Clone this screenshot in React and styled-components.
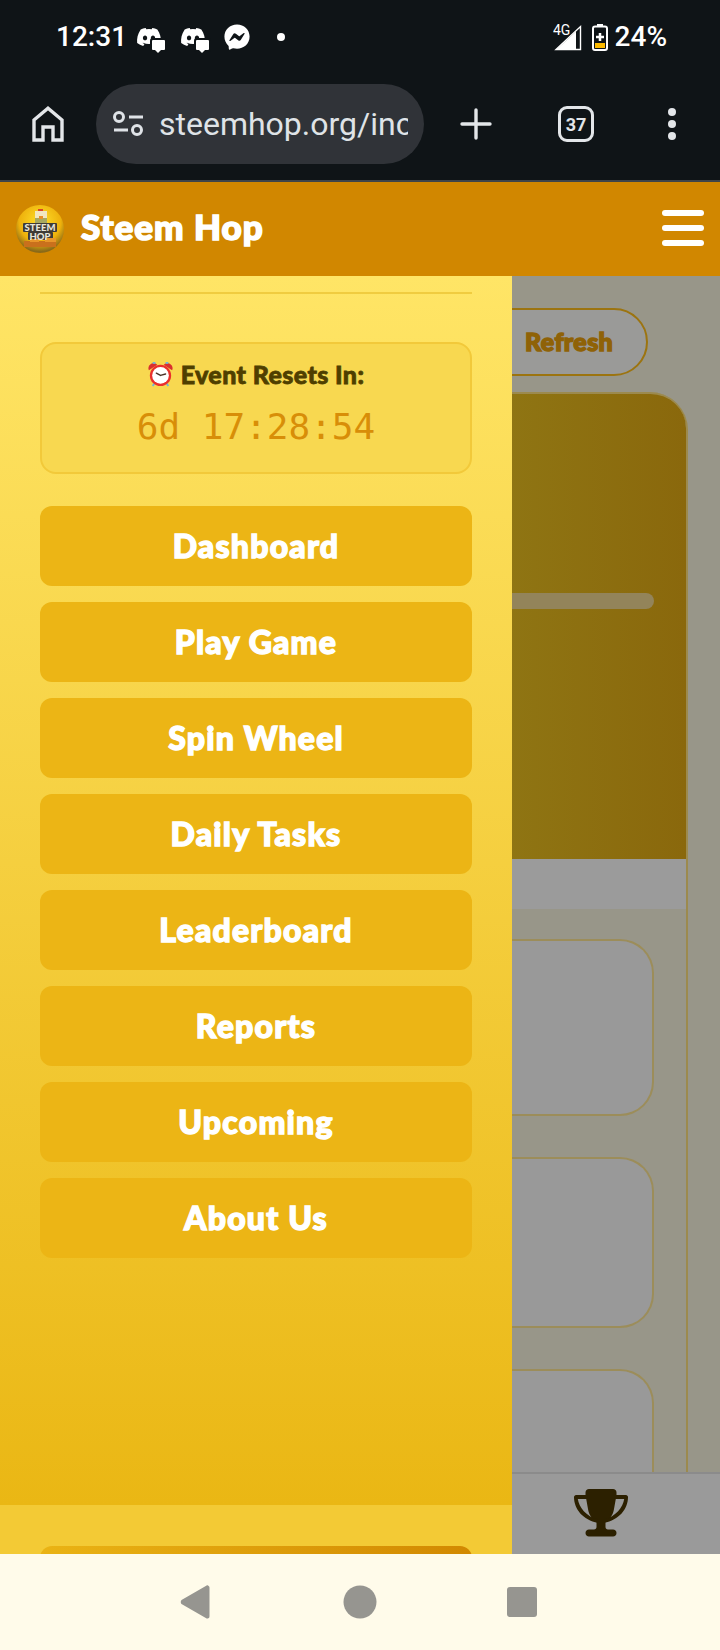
import React from 'react'
import styled, { createGlobalStyle } from 'styled-components'
import { FaDiscord, FaFacebookMessenger } from 'react-icons/fa'

const GlobalStyle = createGlobalStyle`
  html, body {
    margin: 0;
    padding: 0;
    background: #0f1417;
  }
  * {
    box-sizing: border-box;
  }
`

const Screen = styled.div`
  width: 720px;
  height: 1650px;
  display: flex;
  flex-direction: column;
  overflow: hidden;
  font-family: Roboto, sans-serif;
`

/* system status bar */
const StatusBar = styled.div`
  height: 72px;
  flex: none;
  display: flex;
  align-items: center;
  padding: 2px 53px 0 56px;
  background: #0f1417;
  color: #fff;
`

const Clock = styled.span`
  font-size: 28px;
  font-weight: 500;
  line-height: 32px;
  width: 80px;
`

const NoteIcons = styled.div`
  display: flex;
  align-items: center;
  gap: 18px;
  flex: 1;
`

const NoteIcon = styled.span`
  position: relative;
  display: flex;
  width: 26px;
  height: 26px;
  font-size: 26px;
`

const ChatBadge = styled.span`
  position: absolute;
  right: -3px;
  bottom: 0;
  width: 13px;
  height: 10px;
  background: #fff;
  border-radius: 1px;
  box-shadow: 0 0 0 2px #0f1417;
  &::after {
    content: '';
    position: absolute;
    left: 3px;
    bottom: -3px;
    border-left: 3px solid transparent;
    border-right: 3px solid transparent;
    border-top: 3px solid #fff;
  }
`

const Dot = styled.span`
  width: 8px;
  height: 8px;
  margin-left: 9px;
  border-radius: 50%;
  background: #fff;
`

const SysIcons = styled.div`
  display: flex;
  align-items: center;
  gap: 7px;
`

const Percent = styled.span`
  font-size: 28px;
  font-weight: 500;
  line-height: 32px;
`

/* browser toolbar */
const BrowserBar = styled.div`
  height: 110px;
  flex: none;
  display: flex;
  align-items: center;
  padding: 0 0 4px 32px;
  background: #0f1417;
  border-bottom: 2px solid #3e444a;
`

const UrlPill = styled.div`
  width: 328px;
  height: 80px;
  margin-left: 32px;
  padding: 0 16px 0 17px;
  display: flex;
  align-items: center;
  gap: 16px;
  border-radius: 40px;
  background: #303338;
  overflow: hidden;
`

const UrlText = styled.div`
  flex: 1;
  overflow: hidden;
  white-space: nowrap;
  font-size: 32px;
  color: #dfe3e7;
`

const PlusIcon = styled.svg`
  margin-left: 36px;
`

const TabCount = styled.div`
  width: 36px;
  height: 36px;
  margin-left: 66px;
  display: flex;
  align-items: center;
  justify-content: center;
  border: 3.5px solid #e3e6e9;
  border-radius: 9px;
  color: #e3e6e9;
  font-size: 18px;
  font-weight: 700;
`

const MoreDots = styled.div`
  margin-left: 74px;
  display: flex;
  flex-direction: column;
  gap: 4px;
  i {
    width: 8px;
    height: 8px;
    border-radius: 50%;
    background: #e3e6e9;
  }
`

/* site header */
const SiteHeader = styled.header`
  height: 94px;
  flex: none;
  display: flex;
  align-items: center;
  padding: 0 16px;
  background: #d18700;
`

const SiteTitle = styled.h1`
  flex: 1;
  margin: 0 0 6px 17px;
  font-family: Lato, sans-serif;
  font-size: 35px;
  font-weight: 900;
  color: #fff;
  -webkit-text-stroke: 1.6px #fff;
  letter-spacing: 1px;
`

const Burger = styled.div`
  width: 42px;
  display: flex;
  flex-direction: column;
  gap: 9px;
  margin-bottom: 2px;
  i {
    height: 6px;
    border-radius: 3px;
    background: #fff;
  }
`

/* middle area: dimmed page with the drawer over it */
const Viewport = styled.div`
  position: relative;
  flex: 1;
  min-height: 0;
  display: flex;
  flex-direction: column;
  background: #989689;
`

const PageBody = styled.main`
  flex: 1;
  min-height: 0;
  overflow: hidden;
  padding-top: 32px;
`

const RefreshRow = styled.div`
  display: flex;
  justify-content: flex-end;
  padding-right: 72px;
  margin-bottom: 16px;
`

const RefreshButton = styled.div`
  width: 190px;
  height: 68px;
  padding: 0 0 2px 65px;
  display: flex;
  align-items: center;
  border: 2px solid #9c7410;
  border-radius: 34px;
  background: #9a9a98;
  font-family: Lato, sans-serif;
  font-size: 25px;
  font-weight: 900;
  color: #8f6207;
  -webkit-text-stroke: 1.5px #8f6207;
  letter-spacing: 0.4px;
`

const Panel = styled.section`
  width: 688px;
  border-right: 2px solid #9c8a4e;
  border-top-right-radius: 38px;
`

const Hero = styled.div`
  height: 467px;
  padding-top: 199px;
  padding-right: 32px;
  background: linear-gradient(90deg, #927814, #8f7513 74%, #8a680c);
  border-top: 2px solid #9c8a4e;
  border-top-right-radius: 36px;
`

const HeroBar = styled.div`
  height: 16px;
  border-radius: 8px;
  background: #93845a;
`

const HeroBand = styled.div`
  height: 50px;
  background: #9b9b9b;
`

const CardList = styled.div`
  display: flex;
  flex-direction: column;
  gap: 41px;
  padding: 30px 32px 0 0;
  background: #989689;
`

const StatCard = styled.div`
  height: ${props => props.$h}px;
  flex: none;
  border: 2px solid #9c8d5a;
  border-left: 0;
  border-radius: 0 34px 34px 0;
  background: #999999;
`

const TabBar = styled.nav`
  height: 82px;
  flex: none;
  display: flex;
  align-items: flex-start;
  justify-content: flex-end;
  padding: 15px 92px 0 0;
  background: #9a9a9a;
  border-top: 2px solid #8b8b8b;
`

const Drawer = styled.aside`
  position: absolute;
  left: 0;
  top: 0;
  bottom: 0;
  width: 512px;
  display: flex;
  flex-direction: column;
  overflow: hidden;
`

const DrawerScroll = styled.div`
  flex: 1;
  min-height: 0;
  padding: 16px 40px 0;
  background: linear-gradient(180deg, #ffe566, #eab714);
`

const Divider = styled.hr`
  margin: 0 0 48px;
  border: 0;
  height: 2px;
  background: #f0cc40;
`

const TimerBox = styled.div`
  height: 132px;
  margin-bottom: 32px;
  padding-top: 15px;
  display: flex;
  flex-direction: column;
  align-items: center;
  border: 2px solid #f2c93a;
  border-radius: 16px;
  background: #f8d850;
`

const TimerLabel = styled.div`
  display: flex;
  align-items: center;
  gap: 8px;
  height: 30px;
  font-family: Lato, sans-serif;
  font-size: 25px;
  font-weight: 900;
  color: #4f3f00;
  -webkit-text-stroke: 0.8px #4f3f00;
  letter-spacing: 0.4px;
`

const TimerValue = styled.div`
  margin-top: 15px;
  font-family: 'DejaVu Sans Mono', monospace;
  font-size: 36px;
  line-height: 46px;
  color: #d88e08;
`

const NavList = styled.div`
  display: flex;
  flex-direction: column;
  gap: 16px;
`

const NavButton = styled.div`
  height: 80px;
  padding-bottom: 2px;
  display: flex;
  align-items: center;
  justify-content: center;
  border-radius: 12px;
  background: #ecb515;
  font-family: Lato, sans-serif;
  font-size: 32px;
  font-weight: 900;
  color: #fff;
  -webkit-text-stroke: 1.4px #fff;
  letter-spacing: 1.2px;
`

const DrawerFooter = styled.div`
  height: 49px;
  flex: none;
  padding: 41px 40px 0;
  background: #f3ca35;
`

const FooterButton = styled.div`
  height: 80px;
  border-radius: 12px;
  background: linear-gradient(100deg, #eab314, #d18700);
`

/* android navigation bar */
const AndroidNav = styled.div`
  height: 96px;
  flex: none;
  display: flex;
  align-items: center;
  justify-content: center;
  padding-right: 3px;
  gap: 130px;
  background: #fffbea;
`

const BackIcon = styled.svg`
  margin-right: 3px;
`

const navItems = [
  'Dashboard',
  'Play Game',
  'Spin Wheel',
  'Daily Tasks',
  'Leaderboard',
  'Reports',
  'Upcoming',
  'About Us'
]

const Logo = () => (
  <svg width="48" height="48" viewBox="0 0 48 48">
    <defs>
      <radialGradient id="logoBg" cx="50%" cy="35%" r="62%">
        <stop offset="0" stopColor="#ffe02a" />
        <stop offset="0.7" stopColor="#eeb10c" />
        <stop offset="1" stopColor="#8a6a18" />
      </radialGradient>
    </defs>
    <circle cx="24" cy="24" r="24" fill="url(#logoBg)" />
    <rect x="22" y="4" width="5" height="3" fill="#d8432a" />
    <rect x="19" y="6" width="12" height="7" fill="#f2e6c0" />
    <rect x="19" y="13" width="12" height="6" fill="#a8a860" />
    <rect x="23" y="11" width="4" height="3" fill="#e8902a" />
    <rect x="7" y="18" width="34" height="9" rx="1" fill="#3f3b36" />
    <rect x="12" y="27" width="25" height="8" rx="1" fill="#3f3b36" />
    <rect x="8" y="36" width="32" height="6" fill="#c9701c" />
    <rect x="14" y="34" width="9" height="3" fill="#e8952a" />
    <rect x="29" y="33" width="11" height="4" fill="#e8952a" />
    <text x="24" y="26" textAnchor="middle" fontFamily="Lato, sans-serif" fontSize="9.500" fontWeight="900" fill="#e9e5da">STEEM</text>
    <text x="24" y="34.500" textAnchor="middle" fontFamily="Lato, sans-serif" fontSize="9.500" fontWeight="900" fill="#e9e5da">HOP</text>
  </svg>
)

const AlarmClock = () => (
  <svg width="25" height="27" viewBox="0 0 27 29">
    <path d="M5 27l2.500-3.500M22 27l-2.500-3.500" stroke="#6fb6d8" strokeWidth="2" />
    <path d="M1 10a5.500 5.500 0 0 1 9-6zM26 10a5.500 5.500 0 0 0-9-6z" fill="#d92f2f" />
    <rect x="5" y="1" width="3" height="2" fill="#6fb6d8" />
    <rect x="19" y="1" width="3" height="2" fill="#6fb6d8" />
    <circle cx="13.500" cy="15.500" r="11.500" fill="#ea302c" />
    <circle cx="13.500" cy="15.500" r="9" fill="#fff" />
    <path d="M13.500 15.500l-4.500-2.500M13.500 15.500l5.500-1.500" stroke="#4a3328" strokeWidth="1.500" strokeLinecap="round" />
  </svg>
)

const TuneIcon = () => (
  <svg width="30" height="28" viewBox="0 0 30 28" fill="none" stroke="#dfe3e7" strokeWidth="3">
    <circle cx="6" cy="7" r="4.500" />
    <path d="M16 7h14M1 20h14" />
    <circle cx="24" cy="20" r="4.500" />
  </svg>
)

const HomeIcon = () => (
  <svg width="32" height="36" viewBox="0 0 32 36" fill="none" stroke="#e3e6e9" strokeWidth="3.400">
    <path d="M2 34V14L16 2.300 30 14v20H21V21H11v13z" />
  </svg>
)

const SignalIcon = () => (
  <svg width="32" height="28" viewBox="0 0 32 28">
    <text x="0" y="12" fontFamily="Roboto, sans-serif" fontSize="14" fill="#fff">4G</text>
    <path d="M3 26.500L27.500 3.500v23z" fill="#0f1417" stroke="#fff" strokeWidth="1.400" />
    <path d="M3 27L23 8.500v18.500z" fill="#fff" />
  </svg>
)

const BatteryIcon = () => (
  <svg width="16" height="27" viewBox="0 0 16 27">
    <rect x="5" y="0" width="6" height="3" fill="#fff" />
    <rect x="1" y="2.500" width="14" height="23.500" rx="2" fill="#0f1417" stroke="#fff" strokeWidth="2" />
    <rect x="3" y="19" width="10" height="5" fill="#fbb900" />
    <path d="M8 9v8M4 13h8" stroke="#fff" strokeWidth="2.500" />
  </svg>
)

const TrophyIcon = () => (
  <svg width="54" height="48" viewBox="0 0 54 48" fill="#2c2000">
    <path d="M15 0h24c2 0 3.500 1.500 3.500 3.500V6L40 20c-1 6-4 10-8.500 12.500V38c0 1.500 1 2.500 2.500 2.500h5c2 0 3.500 1.500 3.500 3.500s-1.500 3.500-3.500 3.500H15c-2 0-3.500-1.500-3.500-3.500s1.500-3.500 3.500-3.500h5c1.500 0 2.500-1 2.500-2.500v-5.500C18 30 15 26 14 20L11.500 6V3.500C11.500 1.500 13 0 15 0z" />
    <path d="M13 6H2C1 6 0 7 0 8c0 12 9 23 24 26v-3.500C12 27.500 5 18 3.800 10H14zM41 6h11c1 0 2 1 2 2 0 12-9 23-24 26v-3.500C42 27.500 49 18 50.200 10H40z" />
  </svg>
)

const App = () => (
  <Screen>
    <GlobalStyle />
    <StatusBar>
      <Clock>12:31</Clock>
      <NoteIcons>
        <NoteIcon><FaDiscord /><ChatBadge /></NoteIcon>
        <NoteIcon><FaDiscord /><ChatBadge /></NoteIcon>
        <NoteIcon><FaFacebookMessenger /></NoteIcon>
        <Dot />
      </NoteIcons>
      <SysIcons>
        <SignalIcon />
        <BatteryIcon />
        <Percent>24%</Percent>
      </SysIcons>
    </StatusBar>

    <BrowserBar>
      <HomeIcon />
      <UrlPill>
        <TuneIcon />
        <UrlText>steemhop.org/inc</UrlText>
      </UrlPill>
      <PlusIcon width="32" height="32" viewBox="0 0 32 32" stroke="#e3e6e9" strokeWidth="3.400" strokeLinecap="round">
        <path d="M16 2v28M2 16h28" />
      </PlusIcon>
      <TabCount>37</TabCount>
      <MoreDots><i /><i /><i /></MoreDots>
    </BrowserBar>

    <SiteHeader>
      <Logo />
      <SiteTitle>Steem Hop</SiteTitle>
      <Burger><i /><i /><i /></Burger>
    </SiteHeader>

    <Viewport>
      <PageBody>
        <RefreshRow>
          <RefreshButton>Refresh</RefreshButton>
        </RefreshRow>
        <Panel>
          <Hero><HeroBar /></Hero>
          <HeroBand />
          <CardList>
            <StatCard $h={177} />
            <StatCard $h={171} />
            <StatCard $h={171} />
          </CardList>
        </Panel>
      </PageBody>
      <TabBar><TrophyIcon /></TabBar>

      <Drawer>
        <DrawerScroll>
          <Divider />
          <TimerBox>
            <TimerLabel><AlarmClock />Event Resets In:</TimerLabel>
            <TimerValue>6d 17:28:54</TimerValue>
          </TimerBox>
          <NavList>
            {navItems.map(item => (
              <NavButton key={item}>{item}</NavButton>
            ))}
          </NavList>
        </DrawerScroll>
        <DrawerFooter>
          <FooterButton />
        </DrawerFooter>
      </Drawer>
    </Viewport>

    <AndroidNav>
      <BackIcon width="30" height="36" viewBox="0 0 30 36" fill="#969590">
        <path d="M28 1.500c1 .5 1.500 1 1.500 2.500v28c0 1.500-.5 2-1.500 2.500-.7.300-1.500 0-2.200-.6L1.500 20c-1-.9-1-3 0-4L25.800 2c.7-.6 1.500-.8 2.200-.5z" />
      </BackIcon>
      <svg width="34" height="34" viewBox="0 0 34 34" fill="#969590">
        <circle cx="17" cy="17" r="16.500" />
      </svg>
      <svg width="30" height="30" viewBox="0 0 30 30" fill="#969590">
        <rect width="30" height="30" rx="3" />
      </svg>
    </AndroidNav>
  </Screen>
)

export default App
